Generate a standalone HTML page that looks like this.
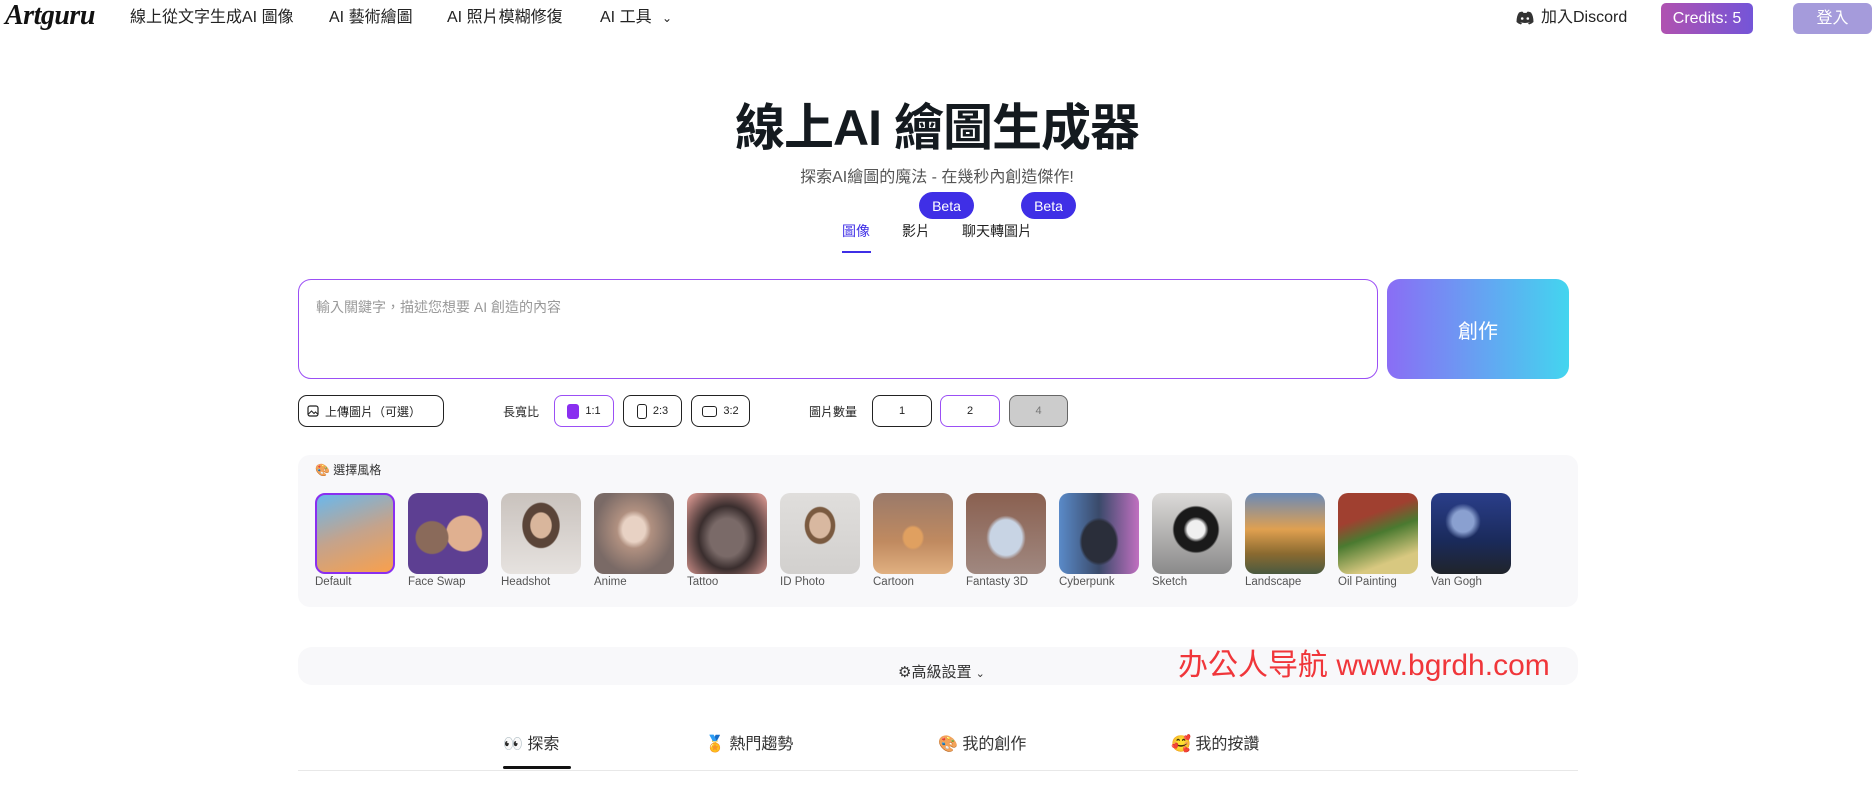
<!DOCTYPE html>
<html><head><meta charset="utf-8"><style>
*{box-sizing:border-box;margin:0;padding:0}
body{width:1874px;height:804px;background:#fff;position:relative;overflow:hidden;font-family:"Liberation Sans","Noto Sans CJK TC",sans-serif;color:#222}
.a{position:absolute;white-space:nowrap}
.nav{top:8px;font-size:16px;color:#222;line-height:20px}
.btn{position:absolute;border:1.5px solid #222;border-radius:8px;background:#fff;font-size:11px;display:flex;align-items:center;justify-content:center;gap:6px}
.th{position:absolute;top:493px;width:80px;height:81px;border-radius:10px}
.lb{position:absolute;top:576px;font-size:11.5px;color:#555}
</style></head><body>
<div class="a" style="left:5px;top:0px;font-family:'Liberation Serif',serif;font-style:italic;font-weight:bold;font-size:28px;color:#111;letter-spacing:-0.5px">Artguru</div>
<div class="a nav" style="left:130px">線上從文字生成AI 圖像</div>
<div class="a nav" style="left:329px">AI 藝術繪圖</div>
<div class="a nav" style="left:447px">AI 照片模糊修復</div>
<div class="a nav" style="left:600px">AI 工具 <span style="font-size:12px;margin-left:6px">&#8964;</span></div>
<svg class="a" style="left:1516px;top:11px" width="18" height="14" viewBox="0 0 18 14"><path d="M3 1.5Q6 0 7 1L7.5 2Q9 1.7 10.5 2L11 1Q12 0 15 1.5Q17.5 5 17.5 11Q15.5 13 13 13.5L12 12Q13.5 11.5 14 11Q9 13 4 11Q4.5 11.5 6 12L5 13.5Q2.5 13 0.5 11Q0.5 5 3 1.5Z" fill="#333"/><circle cx="6.2" cy="7.5" r="1.3" fill="#fff"/><circle cx="11.8" cy="7.5" r="1.3" fill="#fff"/></svg>
<div class="a nav" style="left:1541px;top:8px">加入Discord</div>
<div class="a" style="left:1661px;top:3px;width:92px;height:31px;border-radius:5px;background:linear-gradient(90deg,#b052b0,#7455d8);color:#fff;font-size:16px;display:flex;align-items:center;justify-content:center">Credits: 5</div>
<div class="a" style="left:1793px;top:3px;width:79px;height:31px;border-radius:6px;background:#a59bdb;color:#fff;font-size:16px;line-height:31px;text-align:center">登入</div>

<div class="a" style="left:0;width:1874px;top:99px;text-align:center;font-size:50px;font-weight:bold;color:#141a1f;line-height:58px;letter-spacing:-1px">線上AI 繪圖生成器</div>
<div class="a" style="left:0;width:1874px;top:163px;text-align:center;font-size:16px;color:#555">探索AI繪圖的魔法 - 在幾秒內創造傑作!</div>
<div class="a" style="left:919px;top:192px;width:55px;height:27px;border-radius:14px;background:#3f2fe6;color:#fff;font-size:14px;display:flex;align-items:center;justify-content:center">Beta</div>
<div class="a" style="left:1021px;top:192px;width:55px;height:27px;border-radius:14px;background:#3f2fe6;color:#fff;font-size:14px;display:flex;align-items:center;justify-content:center">Beta</div>
<div class="a" style="left:842px;top:221px;font-size:14px;color:#3f2fe6">圖像</div>
<div class="a" style="left:842px;top:251px;width:29px;height:2px;background:#3f2fe6"></div>
<div class="a" style="left:902px;top:221px;font-size:14px">影片</div>
<div class="a" style="left:962px;top:221px;font-size:14px">聊天轉圖片</div>

<div class="a" style="left:298px;top:279px;width:1080px;height:100px;border:1.5px solid #9b4ff5;border-radius:13px"></div>
<div class="a" style="left:316px;top:297px;font-size:14px;color:#999">輸入關鍵字，描述您想要 AI 創造的內容</div>
<div class="a" style="left:1387px;top:279px;width:182px;height:100px;border-radius:13px;background:linear-gradient(90deg,#8a6df5,#43d5ef);color:#fff;font-size:20px;display:flex;align-items:center;justify-content:center">創作</div>

<div class="btn" style="left:298px;top:395px;width:146px;height:32px;justify-content:flex-start;padding-left:8px;font-size:12px;border-radius:9px"><svg width="12" height="12" viewBox="0 0 12 12"><rect x="1" y="1" width="10" height="10" rx="2" fill="none" stroke="#222" stroke-width="1.2"/><path d="M1.5 9L4.5 6L7 8.5L8.5 7L10.5 9" fill="none" stroke="#222" stroke-width="1"/></svg>上傳圖片（可選）</div>
<div class="a" style="left:503px;top:403px;font-size:12px">長寬比</div>
<div class="btn" style="left:554px;top:395px;width:60px;height:32px;border-color:#9b4ff5"><span style="width:12px;height:15px;background:#8a2ff0;border-radius:3px"></span>1:1</div>
<div class="btn" style="left:623px;top:395px;width:59px;height:32px"><span style="width:10px;height:15px;border:1.3px solid #222;border-radius:3px"></span>2:3</div>
<div class="btn" style="left:691px;top:395px;width:59px;height:32px"><span style="width:15px;height:11px;border:1.3px solid #222;border-radius:3px"></span>3:2</div>
<div class="a" style="left:809px;top:403px;font-size:12px">圖片數量</div>
<div class="btn" style="left:872px;top:395px;width:60px;height:32px">1</div>
<div class="btn" style="left:940px;top:395px;width:60px;height:32px;border-color:#9b4ff5">2</div>
<div class="btn" style="left:1009px;top:395px;width:59px;height:32px;background:#ccc;border-color:#666;color:#777">4</div>

<div class="a" style="left:298px;top:455px;width:1280px;height:152px;border-radius:12px;background:#f8f8fa"></div>
<div class="a" style="left:315px;top:461px;font-size:12px;color:#333">🎨 選擇風格</div>
<div class="th" style="left:315px;background:linear-gradient(160deg,#6ab8ec,#c4a38c 50%,#f9a04c);border:2px solid #8a2ff0"></div>
<div class="th" style="left:408px;background:radial-gradient(circle at 30% 55%,#8a6a5a 0 22%,transparent 24%),radial-gradient(circle at 70% 50%,#e0b090 0 25%,transparent 27%),#5d3f92"></div>
<div class="th" style="left:501px;background:radial-gradient(ellipse at 50% 40%,#d9b69c 0 18%,#5a4438 20% 32%,transparent 34%),linear-gradient(180deg,#c9c2bd,#e6e2df)"></div>
<div class="th" style="left:594px;background:radial-gradient(ellipse at 50% 45%,#e8d2c4 0 20%,#b09080 30%,#7a6a66 70%)"></div>
<div class="th" style="left:687px;background:radial-gradient(ellipse at 50% 55%,#7a6a68 0 30%,#3a2e2e 50%,#c88c86 90%)"></div>
<div class="th" style="left:780px;background:radial-gradient(ellipse at 50% 40%,#d8b8a0 0 18%,#7a5a40 20% 26%,transparent 28%),linear-gradient(180deg,#e0dedc,#d2d0ce)"></div>
<div class="th" style="left:873px;background:radial-gradient(ellipse at 50% 55%,#e0a060 0 16%,transparent 20%),linear-gradient(180deg,#9a7a6a,#c08a60 60%,#e0b080)"></div>
<div class="th" style="left:966px;background:radial-gradient(ellipse at 50% 55%,#c8d4e4 0 28%,transparent 35%),linear-gradient(180deg,#8a6050,#a08880)"></div>
<div class="th" style="left:1059px;background:radial-gradient(ellipse at 50% 60%,#2a2e3a 0 30%,transparent 35%),linear-gradient(90deg,#5a8ac8,#3a4a6a 50%,#c070c0)"></div>
<div class="th" style="left:1152px;background:radial-gradient(ellipse at 55% 45%,#f0f0f0 0 14%,#1a1a1a 20% 35%,transparent 38%),linear-gradient(180deg,#dcdad8,#8a8a8a)"></div>
<div class="th" style="left:1245px;background:linear-gradient(180deg,#6a8ab8,#e0a050 45%,#8a6a30 75%,#4a5a40)"></div>
<div class="th" style="left:1338px;background:linear-gradient(160deg,#a04030 0 30%,#4a7a30 50%,#d8c880 80%)"></div>
<div class="th" style="left:1431px;background:radial-gradient(circle at 40% 35%,#8aa0d0 0 15%,transparent 25%),linear-gradient(180deg,#2a3e8a,#1a2a5a 60%,#20242a)"></div>
<div class="lb" style="left:315px">Default</div>
<div class="lb" style="left:408px">Face Swap</div>
<div class="lb" style="left:501px">Headshot</div>
<div class="lb" style="left:594px">Anime</div>
<div class="lb" style="left:687px">Tattoo</div>
<div class="lb" style="left:780px">ID Photo</div>
<div class="lb" style="left:873px">Cartoon</div>
<div class="lb" style="left:966px">Fantasty 3D</div>
<div class="lb" style="left:1059px">Cyberpunk</div>
<div class="lb" style="left:1152px">Sketch</div>
<div class="lb" style="left:1245px">Landscape</div>
<div class="lb" style="left:1338px">Oil Painting</div>
<div class="lb" style="left:1431px">Van Gogh</div>

<div class="a" style="left:298px;top:647px;width:1280px;height:38px;border-radius:14px;background:#f8f8fa"></div>
<div class="a" style="left:898px;top:661px;font-size:15px;color:#333">⚙高級設置 <span style="font-size:11px">&#8964;</span></div>
<div class="a" style="left:1178px;top:640px;font-size:30px;color:#f0363a">办公人导航 www.bgrdh.com</div>

<div class="a" style="left:503px;top:730px;font-size:16px;color:#333">👀 探索</div>
<div class="a" style="left:705px;top:730px;font-size:16px;color:#333">🏅 熱門趨勢</div>
<div class="a" style="left:938px;top:730px;font-size:16px;color:#333">🎨 我的創作</div>
<div class="a" style="left:1171px;top:730px;font-size:16px;color:#333">🥰 我的按讚</div>
<div class="a" style="left:298px;top:770px;width:1280px;height:1px;background:#e8e8e8"></div>
<div class="a" style="left:503px;top:766px;width:68px;height:3px;border-radius:2px;background:#111"></div>
</body></html>
